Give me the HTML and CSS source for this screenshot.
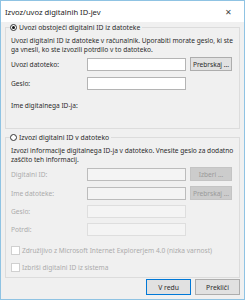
FILE: index.html
```html
<!DOCTYPE html>
<html lang="sl">
<head>
  <meta charset="utf-8">
  <title>Izvoz/uvoz digitalnih ID-jev</title>
  <link rel="stylesheet" href="styles.css">
</head>
<body>
  <div class="window">
    <div class="titlebar">
      <span class="title">Izvoz/uvoz digitalnih ID-jev</span>
      <span class="close">&#x2715;</span>
    </div>
    <div class="content">
      <fieldset class="group">
        <legend><span class="radio checked"></span>Uvozi obstoječi digitalni ID iz datoteke</legend>
        <p class="desc">Uvozi digitalni ID iz datoteke v računalnik. Uporabiti morate geslo, ki ste ga vnesli, ko ste izvozili potrdilo v to datoteko.</p>
        <div class="rows">
          <label>Uvozi datoteko:</label><div class="input"></div><button class="btn">Prebrskaj ...</button>
          <label>Geslo:</label><div class="input"></div><span></span>
          <label class="wide">Ime digitalnega ID-ja:</label>
        </div>
      </fieldset>

      <fieldset class="group off">
        <legend><span class="radio"></span>Izvozi digitalni ID v datoteko</legend>
        <p class="desc">Izvozi informacije digitalnega ID-ja v datoteko. Vnesite geslo za dodatno zaščito teh informacij.</p>
        <div class="rows tight">
          <label>Digitalni ID:</label><div class="input dark"></div><button class="btn">Izberi ...</button>
          <label>Ime datoteke:</label><div class="input dark"></div><button class="btn">Prebrskaj ...</button>
          <label>Geslo:</label><div class="input"></div><span></span>
          <label>Potrdi:</label><div class="input"></div><span></span>
        </div>
        <div class="check"><span class="box"></span>Združljivo z Microsoft Internet Explorerjem 4.0 (nizka varnost)</div>
        <div class="check"><span class="box"></span>Izbriši digitalni ID iz sistema</div>
      </fieldset>

      <div class="actions">
        <button class="btn big default">V redu</button>
        <button class="btn big">Prekliči</button>
      </div>
    </div>
  </div>
</body>
</html>
```

FILE: styles.css
```css
body {
  margin: 0;
  font-family: "Noto Sans", "Open Sans", sans-serif;
  color: #2b2b2b;
}
.window {
  width: 245px;
  height: 300px;
  box-sizing: border-box;
  border: 1px solid #8fc3e3;
  background: #f0f0f0;
  display: flex;
  flex-direction: column;
}
.titlebar {
  height: 21px;
  background: #fff;
  display: flex;
  align-items: center;
  justify-content: space-between;
  padding: 0 12px 0 4px;
  flex-shrink: 0;
}
.title {
  font-size: 7.6px;
  color: #222;
}
.close {
  font-size: 8px;
  color: #444;
}
.content {
  flex: 1;
  padding: 1px 4px 0 4px;
  display: flex;
  flex-direction: column;
}
.group {
  margin: 0;
  padding: 0 4px 0 5px;
  border: 1px solid #dcdcdc;
  min-width: 0;
}
.group + .group {
  margin-top: 4px;
}
legend {
  font-size: 6.8px;
  padding: 0 2px 0 0;
  margin-left: -1px;
  display: flex;
  align-items: center;
  line-height: 9px;
}
.radio {
  width: 7px;
  height: 7px;
  border: 1px solid #333;
  border-radius: 50%;
  background: #fff;
  margin-right: 2px;
  box-sizing: border-box;
  position: relative;
}
.radio.checked::after {
  content: "";
  position: absolute;
  left: 1px;
  top: 1px;
  width: 3px;
  height: 3px;
  border-radius: 50%;
  background: #111;
}
.desc {
  font-size: 6.6px;
  line-height: 9px;
  margin: 4px 0 3px;
}
.rows {
  display: grid;
  grid-template-columns: 72px 99px 42px;
  column-gap: 4px;
  row-gap: 6px;
  align-items: center;
  font-size: 6.6px;
}
.rows.tight {
  row-gap: 5px;
}
.rows label {
  line-height: 13px;
}
.rows .wide {
  grid-column: 1 / 3;
  margin-top: 3px;
  margin-bottom: 16px;
}
.input {
  height: 13px;
  box-sizing: border-box;
  border: 1px solid #b4b4b4;
  background: #fff;
}
.btn {
  font-family: inherit;
  font-size: 6.6px;
  height: 14px;
  padding: 0;
  border: 1px solid #adadad;
  background: #e1e1e1;
  color: #2b2b2b;
}
.off {
  color: #ababab;
}
.off legend {
  color: #2b2b2b;
}
.off .desc {
  color: #2b2b2b;
}
.off .input {
  background: #f4f4f4;
  border-color: #dedede;
}
.off .input.dark {
  border-color: #bcbcbc;
}
.off .btn {
  background: #cccccc;
  border-color: #c4c4c4;
  color: #9a9a9a;
}
.off .rows {
  margin-bottom: 10px;
}
.check {
  display: flex;
  align-items: center;
  font-size: 6.6px;
  line-height: 9px;
  margin-bottom: 8px;
}
.check:last-child {
  margin-bottom: 5px;
}
.box {
  width: 7px;
  height: 7px;
  border: 1px solid #d0d0d0;
  background: #fff;
  margin-right: 2px;
}
.actions {
  display: flex;
  justify-content: flex-end;
  gap: 4px;
  margin-top: auto;
  padding-bottom: 4px;
}
.btn.big {
  width: 45px;
  height: 16px;
  font-size: 6.8px;
}
.btn.default {
  border-color: #0078d7;
}
```
